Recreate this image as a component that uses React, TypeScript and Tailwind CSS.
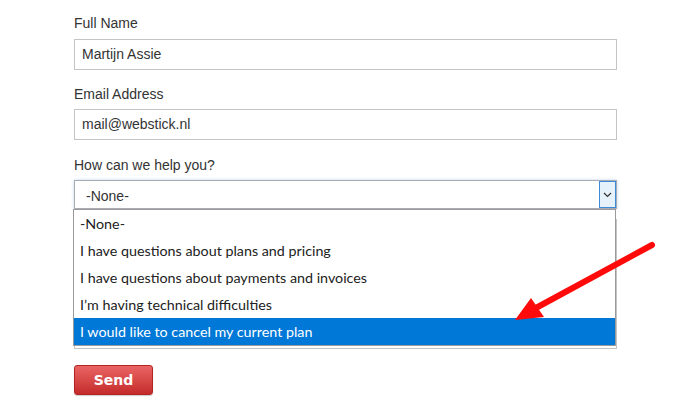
import React from 'react';

const options = [
    '-None-',
    'I have questions about plans and pricing',
    'I have questions about payments and invoices',
    'I\u2019m having technical difficulties',
    'I would like to cancel my current plan',
];

const Label: React.FC<{ children: React.ReactNode; className?: string }> = ({ children, className }) => (
    <div className={`text-[14px] leading-4 text-[#333] ${className ?? ''}`}>{children}</div>
);

export default function App() {
    const selected = options.length - 1;

    return (
        <div className="relative w-[680px] h-[416px] bg-white overflow-hidden font-['Liberation_Sans',Arial,sans-serif]">
            <div className="w-[543px] ml-[74px] pt-[15px] flex flex-col">
                <Label className="mb-[8px]">Full Name</Label>
                <div className="h-[31px] border border-[#c4c4c4] flex items-center px-[7px] text-[14px] text-[#333]">
                    Martijn Assie
                </div>

                <Label className="mt-[16px] mb-[7px]">Email Address</Label>
                <div className="h-[31px] border border-[#c4c4c4] flex items-center px-[7px] text-[14px] text-[#333]">
                    mail@webstick.nl
                </div>

                <Label className="mt-[17px] mb-[7px]">How can we help you?</Label>
                <div className="relative">
                    {/* closed select */}
                    <div className="h-[29px] border border-[#a9acb3] shadow-[0_0_3px_rgba(120,160,210,0.45)] flex items-center justify-between">
                        <span className="pl-[11px] pt-[3px] text-[14px] text-[#333]">-None-</span>
                        <div className="w-[17px] h-[27px] bg-[#e5f1fb] border border-[#3c8ad8] flex items-center justify-center">
                            <svg width="9" height="6" viewBox="0 0 9 6">
                                <path d="M1 1 L4.5 4.5 L8 1" fill="none" stroke="#333" strokeWidth="1.2" />
                            </svg>
                        </div>
                    </div>

                    {/* textarea below, covered by the open list */}
                    <div className="mt-[10px] h-[130px] border border-[#c4c4c4]" />

                    {/* open dropdown list */}
                    <ul className="absolute left-[-1px] top-[29px] w-[543px] bg-white border border-[#9a9a9a] font-['Lato','Open_Sans',sans-serif] text-[14.3px] text-[#222]">
                        {options.map((opt, idx) => (
                            <li
                                key={idx}
                                className={`h-[27px] flex items-center pl-[6px] ${idx === selected ? 'bg-[#0078d7] text-white' : ''}`}
                            >
                                {opt}
                            </li>
                        ))}
                    </ul>
                </div>

                <button className="mt-[16px] w-[79px] h-[30px] rounded-[3px] border border-[#b32424] bg-gradient-to-b from-[#ea6464] to-[#c42a2a] text-white font-bold text-[14px] font-['DejaVu_Sans',Verdana,sans-serif] shadow-[0_1px_1px_rgba(0,0,0,0.2)]">
                    Send
                </button>
            </div>

            {/* annotation arrow */}
            <svg className="absolute left-0 top-0 pointer-events-none" width="680" height="416">
                <line x1="652" y1="245" x2="534" y2="309" stroke="#ff0a0a" strokeWidth="6" strokeLinecap="round" />
                <polygon points="515,320 531,298 544,317" fill="#ff0a0a" />
            </svg>
        </div>
    );
}
